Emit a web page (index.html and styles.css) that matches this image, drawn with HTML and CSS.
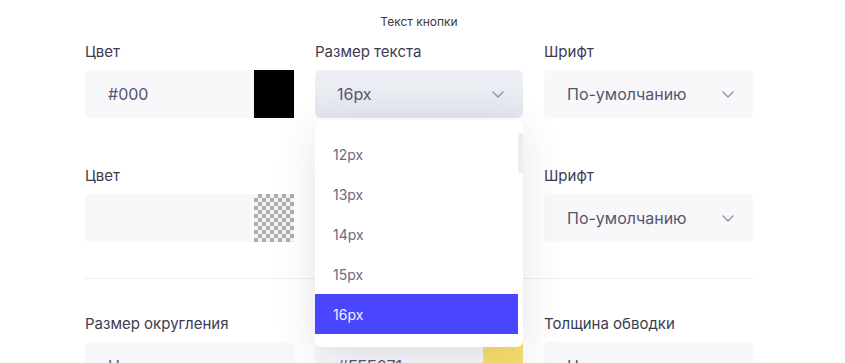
FILE: index.html
```html
<!DOCTYPE html>
<html lang="ru">
<head>
<meta charset="utf-8">
<title>Текст кнопки</title>
<link rel="stylesheet" href="styles.css">
</head>
<body>
<div class="page">
  <div class="title">Текст кнопки</div>

  <div class="grid row1">
    <div class="field">
      <div class="label">Цвет</div>
      <div class="color-input">
        <div class="color-text">#000</div>
        <div class="swatch swatch-black"></div>
      </div>
    </div>
    <div class="field field-open">
      <div class="label">Размер текста</div>
      <div class="select select-active">
        <span>16px</span>
        <svg class="chevron" width="12" height="7" viewBox="0 0 12 7"><path d="M1 1l5 5 5-5" fill="none" stroke="#8b8da3" stroke-width="1.3" stroke-linecap="round" stroke-linejoin="round"/></svg>
      </div>
      <div class="dropdown">
        <div class="list">
          <div class="item">12px</div>
          <div class="item">13px</div>
          <div class="item">14px</div>
          <div class="item">15px</div>
          <div class="item item-selected">16px</div>
        </div>
        <div class="scrollbar"><div class="thumb"></div></div>
      </div>
    </div>
    <div class="field">
      <div class="label">Шрифт</div>
      <div class="select">
        <span>По-умолчанию</span>
        <svg class="chevron" width="12" height="7" viewBox="0 0 12 7"><path d="M1 1l5 5 5-5" fill="none" stroke="#8b8da3" stroke-width="1.3" stroke-linecap="round" stroke-linejoin="round"/></svg>
      </div>
    </div>
  </div>

  <div class="grid row2">
    <div class="field">
      <div class="label">Цвет</div>
      <div class="color-input">
        <div class="color-text"></div>
        <div class="swatch swatch-checker"></div>
      </div>
    </div>
    <div class="field">
      <div class="label label-hidden">&nbsp;</div>
      <div class="select"></div>
    </div>
    <div class="field">
      <div class="label">Шрифт</div>
      <div class="select">
        <span>По-умолчанию</span>
        <svg class="chevron" width="12" height="7" viewBox="0 0 12 7"><path d="M1 1l5 5 5-5" fill="none" stroke="#8b8da3" stroke-width="1.3" stroke-linecap="round" stroke-linejoin="round"/></svg>
      </div>
    </div>
  </div>

  <div class="divider"></div>

  <div class="grid row3">
    <div class="field">
      <div class="label">Размер округления</div>
      <div class="select"><span>Нет</span></div>
    </div>
    <div class="field">
      <div class="label label-hidden">&nbsp;</div>
      <div class="color-input">
        <div class="color-text">#FFE071</div>
        <div class="swatch swatch-yellow"></div>
      </div>
    </div>
    <div class="field">
      <div class="label">Толщина обводки</div>
      <div class="select"><span>Нет</span></div>
    </div>
  </div>
</div>
</body>
</html>
```

FILE: styles.css
```css
* { box-sizing: border-box; }
html, body {
  margin: 0;
  padding: 0;
  background: #ffffff;
  overflow: hidden;
}
body {
  font-family: "Inter", "Noto Sans", sans-serif;
  color: #3c3c50;
}
.page {
  width: 845px;
  height: 363px;
  padding: 14px 92px 0 85px;
}
.title {
  font-size: 12px;
  line-height: 16px;
  color: #3a3a42;
  text-align: center;
  margin-bottom: 12px;
}
.grid {
  display: grid;
  grid-template-columns: 209px 208px 209px;
  column-gap: 21px;
}
.row2 { margin-top: 48px; }
.divider {
  height: 1px;
  background: #eceef3;
  margin-top: 36px;
  margin-bottom: 35px;
}
.field { position: relative; }
.label {
  font-size: 15px;
  line-height: 20px;
  color: #3c3c50;
  margin-bottom: 8px;
}
.label-hidden { visibility: hidden; }
.color-input {
  display: flex;
  height: 48px;
}
.color-text {
  flex: 1;
  background: #f8f8fa;
  border-radius: 6px 0 0 6px;
  padding-left: 23px;
  display: flex;
  align-items: center;
  font-size: 16px;
  color: #55566e;
}
.swatch { width: 40px; height: 48px; }
.swatch-black { background: #000000; }
.swatch-yellow { background: #f9df6c; }
.swatch-checker {
  background: repeating-conic-gradient(#adadad 0 25%, #f4f4f4 0 50%) 0 0 / 8px 8px;
}
.select {
  height: 48px;
  border-radius: 6px;
  background: #f8f8fa;
  display: flex;
  align-items: center;
  justify-content: space-between;
  padding: 0 19px 0 23px;
  font-size: 16px;
  color: #55566e;
}
.field-open .select { padding-left: 22px; }
.select-active {
  background: linear-gradient(180deg, #eef0f5 0%, #e3e6ee 100%);
}
.chevron { display: block; }
.dropdown {
  position: absolute;
  left: 0;
  right: 0;
  top: 78px;
  z-index: 10;
  background: #ffffff;
  border-radius: 6px;
  box-shadow: 0 10px 40px rgba(70, 55, 90, 0.14);
  display: flex;
  padding: 14px 0 13px 0;
}
.list { flex: 1; }
.item {
  height: 40px;
  display: flex;
  align-items: center;
  padding-left: 18px;
  font-size: 14px;
  color: #6a6b80;
}
.item-selected {
  background: #4a45ff;
  color: #f2f2ff;
}
.scrollbar { width: 5px; }
.thumb {
  width: 5px;
  height: 40px;
  margin-top: -1px;
  background: #eceef2;
}
```
